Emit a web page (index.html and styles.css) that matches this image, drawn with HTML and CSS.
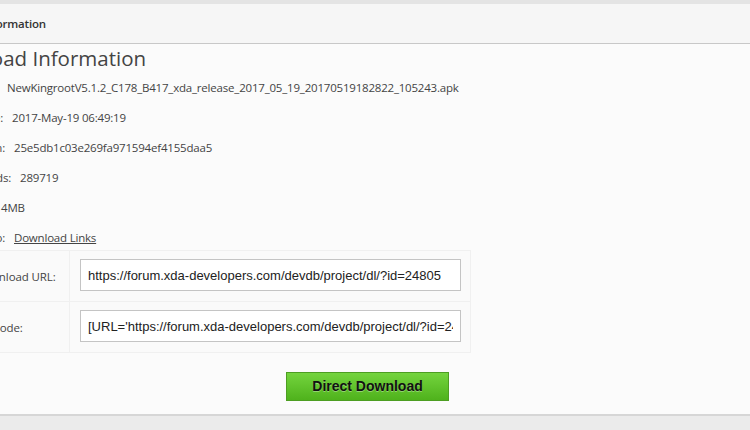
FILE: index.html
```html
<!DOCTYPE html>
<html>
<head>
<meta charset="utf-8">
<link rel="stylesheet" href="styles.css">
</head>
<body>
<div class="topstrip"></div>
<div class="panel">
  <div class="panel-head"><span class="head-text">Download Information</span></div>
  <div class="panel-body">
    <h2 class="title">Download Information</h2>
    <div class="info">
      <div class="row"><span class="lbl w-file">Filename:</span><span class="val">NewKingrootV5.1.2_C178_B417_xda_release_2017_05_19_20170519182822_105243.apk</span></div>
      <div class="row"><span class="lbl w-date">Date:</span><span class="val">2017-May-19 06:49:19</span></div>
      <div class="row"><span class="lbl w-md5">MD5 Hash:</span><span class="val">25e5db1c03e269fa971594ef4155daa5</span></div>
      <div class="row"><span class="lbl w-dl">Downloads:</span><span class="val">289719</span></div>
      <div class="row"><span class="lbl w-size">Size:</span><span class="val">4MB</span></div>
      <div class="row"><span class="lbl w-info">Info:</span><span class="val"><a class="link" href="#">Download Links</a></span></div>
    </div>
    <table class="links">
      <tr>
        <td class="cell-lbl">Download URL:</td>
        <td class="cell-in"><input class="field" type="text" readonly value="https://forum.xda-developers.com/devdb/project/dl/?id=24805"></td>
      </tr>
      <tr>
        <td class="cell-lbl">BB Code:</td>
        <td class="cell-in"><input class="field" type="text" readonly value="[URL='https://forum.xda-developers.com/devdb/project/dl/?id=24805']NewKingrootV5.1.2[/URL]"></td>
      </tr>
    </table>
    <div class="btn-wrap"><a class="btn" href="#">Direct Download</a></div>
  </div>
</div>
<div class="footer"></div>
</body>
</html>
```
FILE: styles.css
```css
html, body {
  margin: 0;
  padding: 0;
}
body {
  width: 750px;
  height: 430px;
  overflow: hidden;
  background: #ebebeb;
  font-family: "Open Sans", "Noto Sans", sans-serif;
  color: #444;
}
.topstrip {
  height: 4px;
  background: #e4e4e4;
}
.panel {
  background: #fbfbfb;
  border-bottom: 2px solid #d6d6d6;
  height: 410px;
  overflow: hidden;
}
.panel-head {
  height: 39px;
  background: #f6f6f6;
  border-bottom: 1px solid #c8c8c8;
  display: flex;
  align-items: center;
  margin-left: -76px;
  font-size: 11.5px;
  letter-spacing: -0.2px;
  font-weight: 600;
  color: #333;
}
.panel-body {
  margin-left: -60px;
}
.title {
  margin: 0 0 0 -10px;
  padding-top: 1px;
  font-size: 20.5px;
  font-weight: 500;
  color: #444;
  line-height: 26px;
}
.info {
  margin-top: 2px;
  font-size: 11.5px;
  letter-spacing: -0.2px;
}
.row {
  height: 30px;
  line-height: 30px;
  white-space: nowrap;
}
.lbl {
  display: inline-block;
  text-align: right;
  margin-right: 9px;
}
.w-file { width: 58px; }
.w-date { width: 63px; }
.w-md5 { width: 65px; }
.w-dl { width: 71px; }
.w-size { width: 52px; }
.w-info { width: 65px; }
.link {
  color: #444;
  text-decoration: underline;
}
.links {
  border-collapse: collapse;
  margin-top: -3px;
  font-size: 11.5px;
  letter-spacing: -0.1px;
}
.links td {
  border: 1px solid #f0f0f0;
  background: #fafafa;
}
.cell-lbl {
  width: 93px;
  padding-left: 34px;
  vertical-align: middle;
}
.cell-in {
  padding: 8px 9px 10px 10px;
  vertical-align: middle;
}
.field {
  display: block;
  box-sizing: border-box;
  width: 381px;
  height: 32px;
  margin: 0;
  border: 1px solid #c4c4c4;
  border-radius: 0;
  background: #fff;
  padding: 0 7px 0 7px;
  font-family: "Liberation Sans", Arial, sans-serif;
  font-size: 13px;
  color: #222;
  outline: none;
}
.btn-wrap {
  display: flex;
  padding-left: 346px;
  padding-top: 19px;
}
.btn {
  display: block;
  width: 161px;
  height: 27px;
  line-height: 27px;
  text-align: center;
  border: 1px solid #4d9e22;
  background: linear-gradient(#74d43e, #4fb21c);
  color: #111;
  font-family: "Liberation Sans", Arial, sans-serif;
  font-size: 14px;
  font-weight: bold;
  text-decoration: none;
  text-shadow: 0 1px 0 rgba(255,255,255,0.35);
}
.footer {
  height: 14px;
  background: #ebebeb;
}
```
